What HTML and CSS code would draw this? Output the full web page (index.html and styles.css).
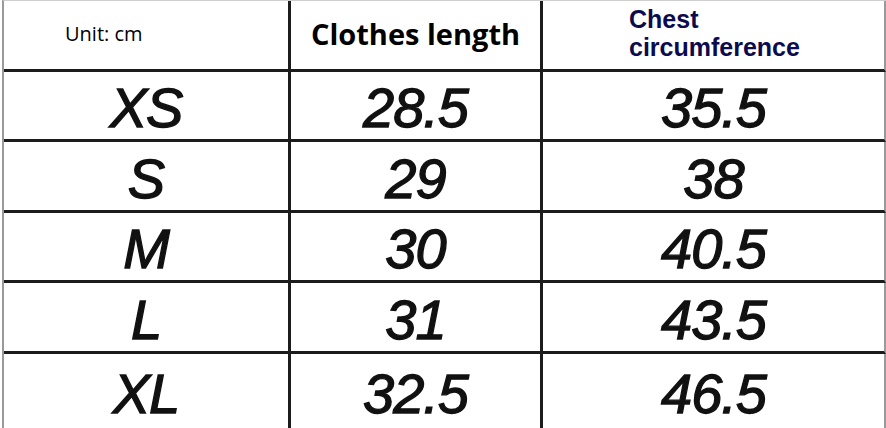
FILE: index.html
```html
<!DOCTYPE html>
<html>
<head>
<meta charset="utf-8">
<link rel="stylesheet" href="styles.css">
</head>
<body>
<div class="sheet">
  <div class="cell head unit"><span>Unit: cm</span></div>
  <div class="cell head length"><span>Clothes length</span></div>
  <div class="cell head chest"><span class="line">Chest</span><span class="line">circumference</span></div>

  <div class="cell num">XS</div><div class="cell num">28.5</div><div class="cell num last">35.5</div>
  <div class="cell num">S</div><div class="cell num">29</div><div class="cell num last">38</div>
  <div class="cell num">M</div><div class="cell num">30</div><div class="cell num last">40.5</div>
  <div class="cell num">L</div><div class="cell num">31</div><div class="cell num last">43.5</div>
  <div class="cell num bottom">XL</div><div class="cell num bottom">32.5</div><div class="cell num bottom last">46.5</div>
</div>
</body>
</html>
```
FILE: styles.css
```css
html, body {
  margin: 0;
  padding: 0;
  background: #fff;
}
body {
  width: 886px;
  height: 428px;
  overflow: hidden;
}
.sheet {
  margin-left: 2px;
  width: 884px;
  height: 428px;
  box-sizing: border-box;
  border-left: 2px solid #9a9a9a;
  border-top: 1px solid #cfcfcf;
  display: grid;
  grid-template-columns: 287px 252px 1fr;
  grid-template-rows: 71px 70px 71px 70px 71px 1fr;
}
.cell {
  box-sizing: border-box;
  border-right: 3px solid #1c1c1c;
  border-bottom: 3px solid #1c1c1c;
  display: flex;
  align-items: center;
  justify-content: center;
  min-width: 0;
}
.cell.last {
  border-right: 2px solid #9a9a9a;
}
.cell.bottom {
  border-bottom: none;
}
.head {
  font-family: "Open Sans", sans-serif;
  color: #000;
}
.unit {
  justify-content: flex-start;
  align-items: flex-start;
  padding: 19px 0 0 61px;
  font-size: 20px;
}
.length {
  font-weight: 700;
  font-size: 29px;
  padding-bottom: 4px;
}
.chest {
  border-right: 2px solid #9a9a9a;
  flex-direction: column;
  justify-content: flex-start;
  align-items: flex-start;
  padding: 4px 0 0 86px;
  font-family: "Liberation Sans", Arial, sans-serif;
  font-weight: 700;
  font-size: 25px;
  line-height: 28px;
  color: #0b0b4e;
}
.line {
  display: block;
}
.num {
  font-family: "Liberation Sans", Arial, sans-serif;
  font-style: italic;
  font-size: 56px;
  color: #111;
  padding-top: 4px;
  letter-spacing: -1px;
  -webkit-text-stroke: 1.3px #111;
}
```
